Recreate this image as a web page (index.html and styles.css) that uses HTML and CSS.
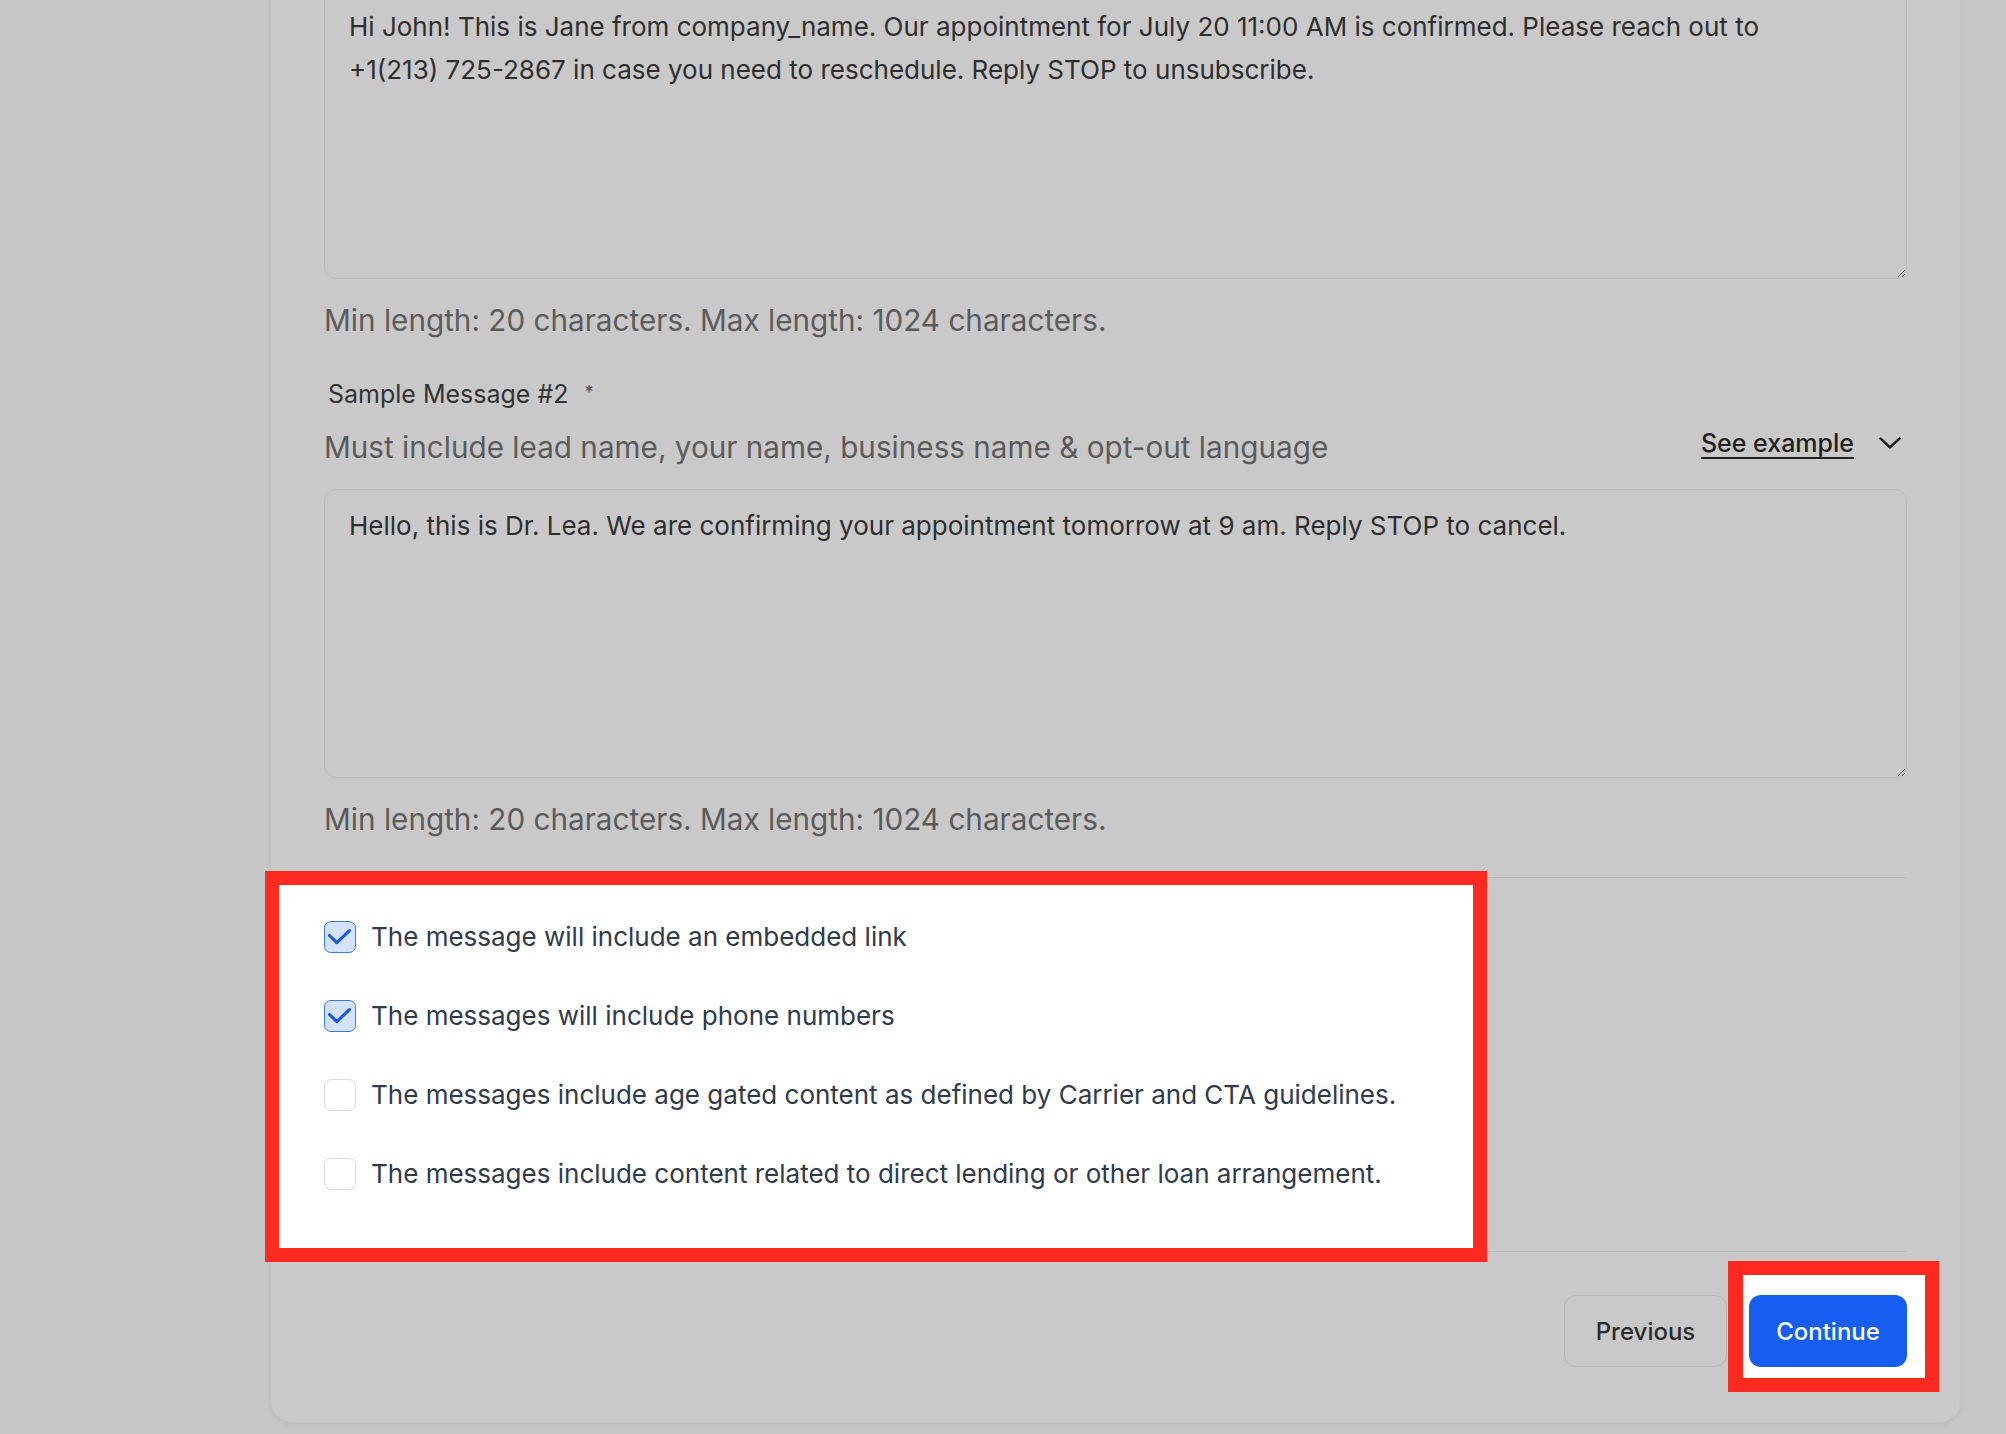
FILE: index.html
```html
<!DOCTYPE html>
<html lang="en">
<head>
<meta charset="utf-8">
<title>Sample messages</title>
<link rel="stylesheet" href="styles.css">
</head>
<body>
<main class="card">
  <textarea class="msg" readonly>Hi John! This is Jane from company_name. Our appointment for July 20 11:00 AM is confirmed. Please reach out to +1(213) 725-2867 in case you need to reschedule. Reply STOP to unsubscribe.</textarea>
  <p class="help">Min length: 20 characters. Max length: 1024 characters.</p>

  <label class="label">Sample Message #2 <span class="req">*</span></label>
  <div class="hint-row">
    <p class="hint">Must include lead name, your name, business name &amp; opt-out language</p>
    <a class="example" href="#">
      <span class="example-text">See example</span>
      <svg class="chev" width="22" height="12" viewBox="0 0 22 12"><path d="M1.6 1.6 L11 10.4 L20.4 1.6" fill="none" stroke="#1f1f1f" stroke-width="2.6" stroke-linecap="round" stroke-linejoin="round"/></svg>
    </a>
  </div>
  <textarea class="msg" readonly>Hello, this is Dr. Lea. We are confirming your appointment tomorrow at 9 am. Reply STOP to cancel.</textarea>
  <p class="help">Min length: 20 characters. Max length: 1024 characters.</p>

  <section class="checks">
    <div class="spot spot-checks">
      <label class="row">
        <span class="box on"><svg width="32" height="32" viewBox="0 0 32 32"><path d="M5.5 14.5 L12.8 21.6 L25.5 9.6" fill="none" stroke="#1a58e8" stroke-width="3.1" stroke-linecap="round" stroke-linejoin="round"/></svg></span>
        <span class="row-text">The message will include an embedded link</span>
      </label>
      <label class="row">
        <span class="box on"><svg width="32" height="32" viewBox="0 0 32 32"><path d="M5.5 14.5 L12.8 21.6 L25.5 9.6" fill="none" stroke="#1a58e8" stroke-width="3.1" stroke-linecap="round" stroke-linejoin="round"/></svg></span>
        <span class="row-text">The messages will include phone numbers</span>
      </label>
      <label class="row">
        <span class="box"></span>
        <span class="row-text">The messages include age gated content as defined by Carrier and CTA guidelines.</span>
      </label>
      <label class="row">
        <span class="box"></span>
        <span class="row-text">The messages include content related to direct lending or other loan arrangement.</span>
      </label>
    </div>
  </section>

  <footer class="actions">
    <button class="btn btn-prev" type="button">Previous</button>
    <div class="spot spot-btn">
      <button class="btn btn-next" type="button">Continue</button>
    </div>
  </footer>
</main>
</body>
</html>
```

FILE: styles.css
```css
html, body {
  margin: 0;
  padding: 0;
}
body {
  width: 2006px;
  height: 1434px;
  overflow: hidden;
  background: #c6c6c6;
  font-family: Inter, "Noto Sans", sans-serif;
  color: #2e2e2e;
}
.card {
  box-sizing: border-box;
  width: 1691px;
  margin: -60px 0 0 270px;
  padding: 49px 53px 30px 53px;
  background: #c9c9c9;
  border: 1px solid #c2c2c2;
  border-radius: 22px;
  box-shadow: 0 2px 5px rgba(0,0,0,0.06);
  display: flex;
  flex-direction: column;
}
.msg {
  box-sizing: border-box;
  display: block;
  width: 100%;
  height: 289px;
  margin: 0;
  padding: 14px 90px 14px 24px;
  border: 1px solid #bcbcbc;
  border-radius: 12px;
  background: transparent;
  font-family: Inter, sans-serif;
  font-size: 26px;
  line-height: 43px;
  color: #2e2e2e;
  outline: none;
}
.help {
  margin: 21px 0 0;
  font-size: 29.7px;
  line-height: 40px;
  color: #5b5b5b;
}
.label {
  display: block;
  margin: 37px 0 0 4px;
  font-size: 25px;
  line-height: 32px;
  color: #333333;
}
.req {
  margin-left: 9px;
  font-size: 18px;
  vertical-align: 4px;
  color: #555555;
}
.hint-row {
  display: flex;
  justify-content: space-between;
  align-items: flex-start;
  margin-top: 17px;
  margin-bottom: 22px;
}
.hint {
  margin: 0;
  font-size: 29.7px;
  line-height: 40px;
  color: #5b5b5b;
}
.example {
  display: flex;
  align-items: center;
  gap: 25px;
  margin-top: -4px;
  margin-right: 6px;
  height: 40px;
  color: #1f1f1f;
  font-size: 25px;
  font-weight: 500;
  text-decoration: none;
}
.example-text {
  text-decoration: underline;
  text-decoration-thickness: 2px;
  text-underline-offset: 5px;
}
.checks {
  margin-top: 38px;
  border-top: 1px solid #bcbcbc;
  border-bottom: 1px solid #bcbcbc;
}
.spot {
  box-sizing: border-box;
  background: #ffffff;
  border: 14px solid #ff2a1f;
}
.spot-checks {
  width: 1222px;
  margin: -7px 0 -11px -59px;
  padding: 36px 0 58px 45px;
  display: flex;
  flex-direction: column;
  gap: 47px;
}
.row {
  display: flex;
  align-items: center;
  gap: 15px;
  height: 32px;
}
.box {
  box-sizing: border-box;
  width: 32px;
  height: 32px;
  flex: none;
  border: 1px solid #d6dae1;
  border-radius: 7px;
  background: #ffffff;
  display: flex;
}
.box.on {
  background: #d3e2fd;
  border-color: #3b7af4;
}
.box svg {
  margin: -1px;
}
.row-text {
  font-size: 26px;
  line-height: 32px;
  color: #2f3a4c;
}
.actions {
  display: flex;
  justify-content: flex-end;
  align-items: flex-start;
  padding-top: 9px;
  margin-right: -32px;
}
.btn {
  box-sizing: border-box;
  height: 72px;
  border-radius: 12px;
  font-family: Inter, sans-serif;
  font-size: 24px;
  font-weight: 500;
  padding: 0;
  cursor: pointer;
}
.btn-prev {
  width: 163px;
  margin-top: 34px;
  margin-right: 1px;
  background: transparent;
  border: 1px solid #b8b8b8;
  color: #2b2b2b;
}
.spot-btn {
  border-left-width: 15px;
  padding: 20px 18px 11px 6px;
}
.btn-next {
  display: block;
  width: 158px;
  background: #155eef;
  border: none;
  color: #ffffff;
}
```
